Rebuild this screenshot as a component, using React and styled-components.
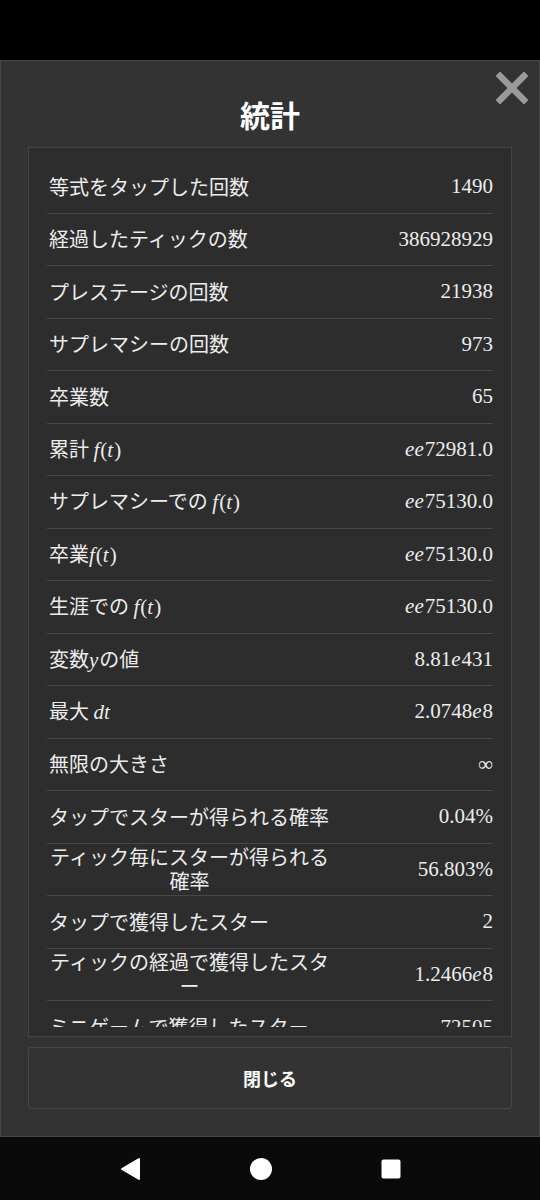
import React from "react"
import styled, { createGlobalStyle } from "styled-components"

const GlobalStyle = createGlobalStyle`
    html, body {
        margin: 0;
        padding: 0;
        background: #000;
    }
    * {
        box-sizing: border-box;
    }
`

const Screen = styled.div`
    width: 540px;
    height: 1200px;
    display: flex;
    flex-direction: column;
    background: #000;
    font-family: "Noto Sans CJK JP", "Noto Sans", sans-serif;
    overflow: hidden;
`

const StatusArea = styled.div`
    height: 60px;
    flex: none;
    background: #000;
`

const Panel = styled.div`
    position: relative;
    flex: 1;
    min-height: 0;
    display: flex;
    flex-direction: column;
    background: #333333;
    border: 1px solid #464646;
    padding: 0 27px 27px;
`

const CloseX = styled.button`
    position: absolute;
    top: 11px;
    right: 11px;
    width: 32px;
    height: 32px;
    padding: 0;
    border: none;
    background: transparent;
    cursor: pointer;
`

const Title = styled.h1`
    margin: 0;
    padding-top: 33px;
    height: 86px;
    line-height: 40px;
    text-align: center;
    font-size: 30px;
    font-weight: 700;
    color: #ffffff;
`

const List = styled.div`
    flex: none;
    height: 890px;
    background: #2d2d2d;
    border: 1px solid #444444;
    padding: 13px 18px 9px;
`

const Scroller = styled.div`
    height: 100%;
    overflow: hidden;
`

const Row = styled.div`
    min-height: 52.5px;
    display: flex;
    align-items: center;
    justify-content: space-between;
    border-bottom: ${(p) => (p.$last ? "none" : "1px solid #474747")};
    padding: 0 0 0 2px;
`

const Label = styled.div`
    max-width: 281px;
    text-align: center;
    font-size: 20px;
    line-height: 24px;
    color: #ececec;
`

const Value = styled.div`
    font-family: "Liberation Serif", "Times New Roman", serif;
    font-size: 21px;
    color: #ececec;
    white-space: nowrap;
`

const Mi = styled.span`
    font-family: "Liberation Serif", "Times New Roman", serif;
    font-style: italic;
    font-size: 21px;
    padding-right: 1px;
`

const Mo = styled.span`
    font-family: "Liberation Serif", "Times New Roman", serif;
    font-size: 21px;
`

const CloseButton = styled.button`
    margin-top: 10px;
    height: 62px;
    flex: none;
    width: 100%;
    background: #333333;
    border: 1px solid #474747;
    border-radius: 3px;
    color: #ffffff;
    font-family: "Noto Sans CJK JP", "Noto Sans", sans-serif;
    font-size: 18px;
    font-weight: 700;
    cursor: pointer;
`

const NavBar = styled.div`
    height: 63px;
    flex: none;
    background: #0a0a0a;
    display: flex;
    align-items: center;
    justify-content: center;
    gap: 108px;
    padding-right: 18px;
`

const NavIcon = styled.div`
    width: 22px;
    height: 22px;
    display: flex;
    align-items: center;
    justify-content: center;
`

const Ft = () => (
    <>
        <Mi>f</Mi>
        <Mo>(</Mo>
        <Mi>t</Mi>
        <Mo>)</Mo>
    </>
)

const E = ({ children }) => <Mi>{children}</Mi>

const stats = [
    { label: "等式をタップした回数", value: "1490" },
    { label: "経過したティックの数", value: "386928929" },
    { label: "プレステージの回数", value: "21938" },
    { label: "サプレマシーの回数", value: "973" },
    { label: "卒業数", value: "65" },
    { label: <>累計 <Ft /></>, value: <><E>ee</E>72981.0</> },
    { label: <>サプレマシーでの <Ft /></>, value: <><E>ee</E>75130.0</> },
    { label: <>卒業<Ft /></>, value: <><E>ee</E>75130.0</> },
    { label: <>生涯での <Ft /></>, value: <><E>ee</E>75130.0</> },
    { label: <>変数<Mi>y</Mi>の値</>, value: <>8.81<E>e</E>431</> },
    { label: <>最大 <Mi>dt</Mi></>, value: <>2.0748<E>e</E>8</> },
    { label: "無限の大きさ", value: "∞" },
    { label: "タップでスターが得られる確率", value: "0.04%" },
    { label: "ティック毎にスターが得られる確率", value: "56.803%" },
    { label: "タップで獲得したスター", value: "2" },
    { label: "ティックの経過で獲得したスター", value: <>1.2466<E>e</E>8</> },
    { label: "ミニゲームで獲得したスター", value: "72505" },
]

export default function App() {
    return (
        <Screen>
            <GlobalStyle />
            <StatusArea />
            <Panel>
                <CloseX aria-label="close">
                    <svg width="32" height="32" viewBox="0 0 32 32">
                        <path d="M4 4 L28 28 M28 4 L4 28" stroke="#9a9a9a" strokeWidth="6.5" strokeLinecap="square" />
                    </svg>
                </CloseX>
                <Title>統計</Title>
                <List>
                    <Scroller>
                        {stats.map((s, i) => (
                            <Row key={i} $last={i === stats.length - 1}>
                                <Label>{s.label}</Label>
                                <Value>{s.value}</Value>
                            </Row>
                        ))}
                    </Scroller>
                </List>
                <CloseButton>閉じる</CloseButton>
            </Panel>
            <NavBar>
                <NavIcon>
                    <svg width="22" height="24" viewBox="0 0 22 24">
                        <path d="M19 2 L19 22 L2 12 Z" fill="#fff" stroke="#fff" strokeWidth="2" strokeLinejoin="round" />
                    </svg>
                </NavIcon>
                <NavIcon>
                    <svg width="22" height="22" viewBox="0 0 22 22">
                        <circle cx="11" cy="11" r="11" fill="#fff" />
                    </svg>
                </NavIcon>
                <NavIcon>
                    <svg width="20" height="20" viewBox="0 0 20 20">
                        <rect x="0.5" y="0.5" width="19" height="19" rx="2" fill="#fff" />
                    </svg>
                </NavIcon>
            </NavBar>
        </Screen>
    )
}
